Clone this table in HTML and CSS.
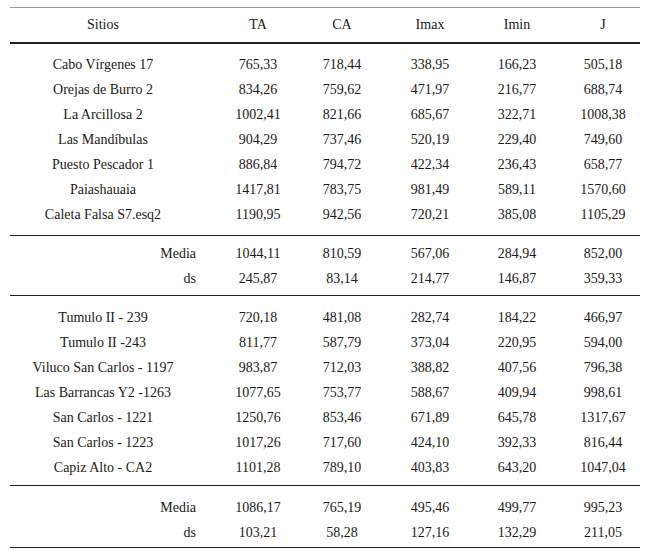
FILE: index.html
```html
<!DOCTYPE html>
<html lang="es">
<head>
<meta charset="utf-8">
<title>Tabla</title>
<link rel="stylesheet" href="styles.css">
</head>
<body>
<div class="table">
  <div class="row head">
    <div class="cell name">Sitios</div><div class="cell">TA</div><div class="cell">CA</div><div class="cell">Imax</div><div class="cell">Imin</div><div class="cell">J</div>
  </div>
  <div class="section s1">
    <div class="row"><div class="cell name">Cabo Vírgenes 17</div><div class="cell">765,33</div><div class="cell">718,44</div><div class="cell">338,95</div><div class="cell">166,23</div><div class="cell">505,18</div></div>
    <div class="row"><div class="cell name">Orejas de Burro 2</div><div class="cell">834,26</div><div class="cell">759,62</div><div class="cell">471,97</div><div class="cell">216,77</div><div class="cell">688,74</div></div>
    <div class="row"><div class="cell name">La Arcillosa 2</div><div class="cell">1002,41</div><div class="cell">821,66</div><div class="cell">685,67</div><div class="cell">322,71</div><div class="cell">1008,38</div></div>
    <div class="row"><div class="cell name">Las Mandíbulas</div><div class="cell">904,29</div><div class="cell">737,46</div><div class="cell">520,19</div><div class="cell">229,40</div><div class="cell">749,60</div></div>
    <div class="row"><div class="cell name">Puesto Pescador 1</div><div class="cell">886,84</div><div class="cell">794,72</div><div class="cell">422,34</div><div class="cell">236,43</div><div class="cell">658,77</div></div>
    <div class="row"><div class="cell name">Paiashauaia</div><div class="cell">1417,81</div><div class="cell">783,75</div><div class="cell">981,49</div><div class="cell">589,11</div><div class="cell">1570,60</div></div>
    <div class="row"><div class="cell name">Caleta Falsa S7.esq2</div><div class="cell">1190,95</div><div class="cell">942,56</div><div class="cell">720,21</div><div class="cell">385,08</div><div class="cell">1105,29</div></div>
  </div>
  <div class="section s2">
    <div class="row"><div class="cell label">Media</div><div class="cell">1044,11</div><div class="cell">810,59</div><div class="cell">567,06</div><div class="cell">284,94</div><div class="cell">852,00</div></div>
    <div class="row"><div class="cell label">ds</div><div class="cell">245,87</div><div class="cell">83,14</div><div class="cell">214,77</div><div class="cell">146,87</div><div class="cell">359,33</div></div>
  </div>
  <div class="section s3">
    <div class="row"><div class="cell name">Tumulo II - 239</div><div class="cell">720,18</div><div class="cell">481,08</div><div class="cell">282,74</div><div class="cell">184,22</div><div class="cell">466,97</div></div>
    <div class="row"><div class="cell name">Tumulo II -243</div><div class="cell">811,77</div><div class="cell">587,79</div><div class="cell">373,04</div><div class="cell">220,95</div><div class="cell">594,00</div></div>
    <div class="row"><div class="cell name">Viluco San Carlos - 1197</div><div class="cell">983,87</div><div class="cell">712,03</div><div class="cell">388,82</div><div class="cell">407,56</div><div class="cell">796,38</div></div>
    <div class="row"><div class="cell name">Las Barrancas Y2 -1263</div><div class="cell">1077,65</div><div class="cell">753,77</div><div class="cell">588,67</div><div class="cell">409,94</div><div class="cell">998,61</div></div>
    <div class="row"><div class="cell name">San Carlos - 1221</div><div class="cell">1250,76</div><div class="cell">853,46</div><div class="cell">671,89</div><div class="cell">645,78</div><div class="cell">1317,67</div></div>
    <div class="row"><div class="cell name">San Carlos - 1223</div><div class="cell">1017,26</div><div class="cell">717,60</div><div class="cell">424,10</div><div class="cell">392,33</div><div class="cell">816,44</div></div>
    <div class="row"><div class="cell name">Capiz Alto - CA2</div><div class="cell">1101,28</div><div class="cell">789,10</div><div class="cell">403,83</div><div class="cell">643,20</div><div class="cell">1047,04</div></div>
  </div>
  <div class="section s4">
    <div class="row"><div class="cell label">Media</div><div class="cell">1086,17</div><div class="cell">765,19</div><div class="cell">495,46</div><div class="cell">499,77</div><div class="cell">995,23</div></div>
    <div class="row"><div class="cell label">ds</div><div class="cell">103,21</div><div class="cell">58,28</div><div class="cell">127,16</div><div class="cell">132,29</div><div class="cell">211,05</div></div>
  </div>
</div>
</body>
</html>
```
FILE: styles.css
```css
html, body {
  margin: 0;
  padding: 0;
  background: #ffffff;
}

body {
  font-family: "Liberation Serif", "Times New Roman", serif;
  font-size: 14px;
  color: #1a1a1a;
}

.table {
  margin: 7px 0 0 10px;
  width: 630px;
  border-top: 1px solid #9a9a9a;
}

.row {
  display: grid;
  grid-template-columns: 206px 84px 84px 92px 82px 82px;
  height: 25px;
  align-items: center;
  line-height: 25px;
}

.cell {
  text-align: center;
  white-space: nowrap;
}

.cell:last-child {
  padding-left: 8px;
}

.cell.name {
  padding-right: 20px;
}

.cell.label {
  text-align: right;
  padding-right: 20px;
}

.row.head {
  height: 34px;
  line-height: 34px;
  border-bottom: 2px solid #222222;
}

.section {
  border-bottom: 1px solid #222222;
}

.s1 {
  padding: 8px 0 8px;
}

.s2 {
  padding: 5px 0 4px;
}

.s3 {
  padding: 9px 0 5px;
}

.s4 {
  padding: 9px 0 2px;
}
```
